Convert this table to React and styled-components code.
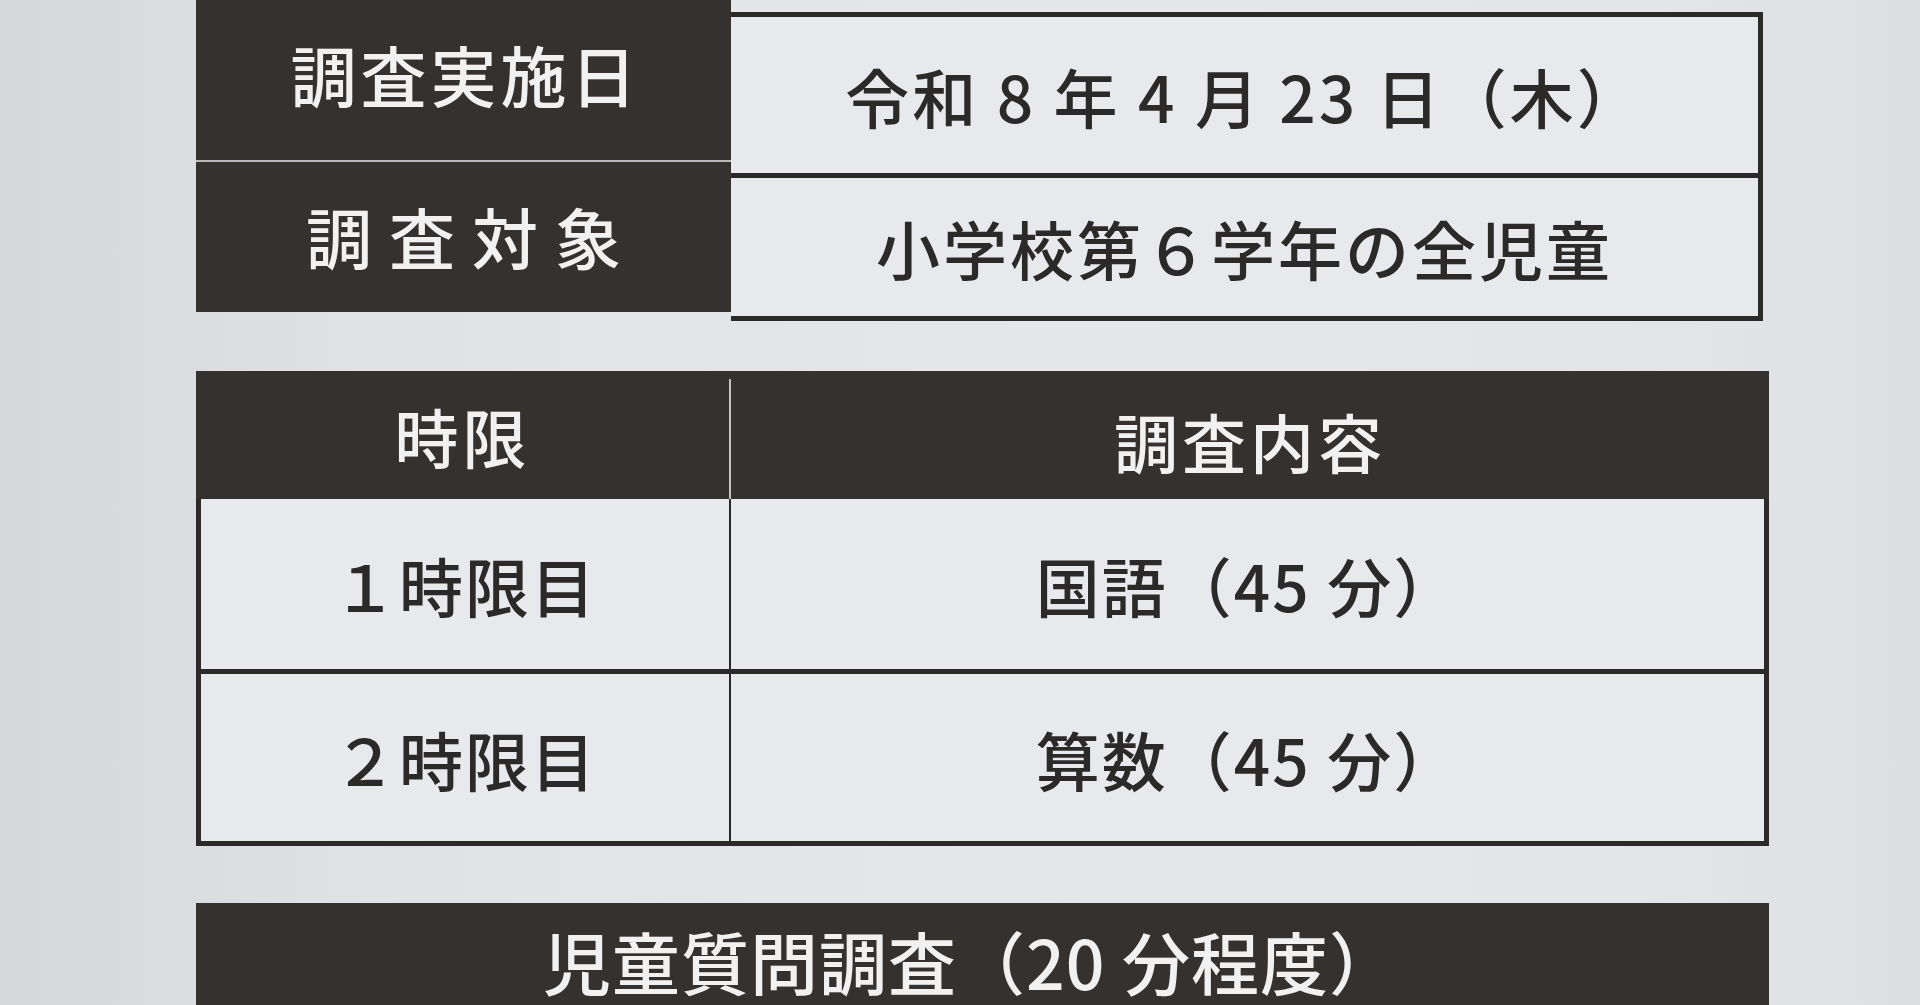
import React from 'react';
import styled, { createGlobalStyle } from 'styled-components';

const GlobalStyle = createGlobalStyle`
  html, body {
    margin: 0;
    padding: 0;
    height: 100%;
  }
  body {
    overflow: hidden;
    background: linear-gradient(to right, #d6d7db 0%, #e1e2e6 20%, #e6e7ea 55%, #e4e5e9 85%, #dedfe3 100%);
    font-family: "Noto Sans CJK JP", "Noto Sans", sans-serif;
  }
`;

const INK = '#2c2a29';
const DARK = '#35312f';

const Page = styled.div`
  width: 1920px;
  height: 1005px;
  box-sizing: border-box;
  padding-left: 196px;
  display: flex;
  flex-direction: column;
`;

// --- table 1: date / target ---

const InfoTable = styled.div`
  display: grid;
  grid-template-columns: 535px 1032px;
  align-items: start;
`;

const LabelColumn = styled.div`
  background: ${DARK};
  height: 312px;
  display: flex;
  flex-direction: column;
`;

const LabelCell = styled.div`
  flex: 1;
  display: flex;
  align-items: center;
  justify-content: center;
  color: #f1f1f2;
  font-size: 66px;
  font-weight: 500;
  line-height: 1;
  letter-spacing: ${({ $spacing }) => $spacing}px;
  margin-right: -${({ $spacing }) => $spacing}px;
  padding-bottom: ${({ $shift }) => $shift || 0}px;
`;

const LabelDivider = styled.div`
  height: 2px;
  background: #b9b9bc;
`;

const ValueColumn = styled.div`
  margin-top: 12px;
  border: 5px solid ${INK};
  border-left: none;
  display: flex;
  flex-direction: column;
  background: #e8e9ec;
`;

const ValueCell = styled.div`
  height: ${({ $h }) => $h}px;
  display: flex;
  align-items: center;
  justify-content: center;
  color: ${INK};
  font-size: 64px;
  font-weight: 500;
  line-height: 1;
  letter-spacing: ${({ $spacing }) => $spacing || 0}px;
  & + & {
    border-top: 5px solid ${INK};
  }
`;

// --- table 2: schedule ---

const ScheduleTable = styled.div`
  margin-top: 50px;
  width: 1573px;
  display: flex;
  flex-direction: column;
`;

const HeaderRow = styled.div`
  display: grid;
  grid-template-columns: 533px 1fr;
  height: 128px;
  background: ${DARK};
`;

const HeaderCell = styled.div`
  display: flex;
  align-items: center;
  justify-content: center;
  color: #f1f1f2;
  font-size: 64px;
  font-weight: 500;
  line-height: 1;
  letter-spacing: 4px;
  & + & {
    border-left: 2px solid #c4c4c7;
    margin-top: 8px;
    padding-top: 2px;
  }
`;

const Body = styled.div`
  border: 5px solid ${INK};
  border-top: none;
  background: #e8e9ec;
`;

const BodyRow = styled.div`
  display: grid;
  grid-template-columns: 528px 1fr;
  height: ${({ $h }) => $h}px;
  & + & {
    border-top: 5px solid ${INK};
  }
`;

const BodyCell = styled.div`
  display: flex;
  align-items: center;
  justify-content: center;
  color: ${INK};
  font-size: 64px;
  font-weight: 500;
  line-height: 1;
  letter-spacing: 2px;
  & + & {
    border-left: 2px solid ${INK};
  }
`;

// --- table 3: questionnaire bar ---

const SurveyBar = styled.div`
  margin-top: 57px;
  width: 1573px;
  flex: 1;
  background: ${DARK};
  display: flex;
  justify-content: center;
  padding-top: 24px;
  padding-right: 24px;
  box-sizing: border-box;
  color: #f1f1f2;
  font-size: 68px;
  font-weight: 500;
  line-height: 1;
  letter-spacing: 1px;
`;

const rows = [
  { period: '１時限目', subject: '国語（45 分）', h: 170 },
  { period: '２時限目', subject: '算数（45 分）', h: 167 },
];

export default function App() {
  return (
    <>
      <GlobalStyle />
      <Page>
        <InfoTable>
          <LabelColumn>
            <LabelCell $spacing={4} $shift={14}>調査実施日</LabelCell>
            <LabelDivider />
            <LabelCell $spacing={17} $shift={4}>調査対象</LabelCell>
          </LabelColumn>
          <ValueColumn>
            <ValueCell $h={156} $spacing={3}>令和 8 年 4 月 23 日（木）</ValueCell>
            <ValueCell $h={138} $spacing={3}>小学校第６学年の全児童</ValueCell>
          </ValueColumn>
        </InfoTable>

        <ScheduleTable>
          <HeaderRow>
            <HeaderCell>時限</HeaderCell>
            <HeaderCell>調査内容</HeaderCell>
          </HeaderRow>
          <Body>
            {rows.map((r) => (
              <BodyRow key={r.period} $h={r.h}>
                <BodyCell>{r.period}</BodyCell>
                <BodyCell>{r.subject}</BodyCell>
              </BodyRow>
            ))}
          </Body>
        </ScheduleTable>

        <SurveyBar>児童質問調査（20 分程度）</SurveyBar>
      </Page>
    </>
  );
}
